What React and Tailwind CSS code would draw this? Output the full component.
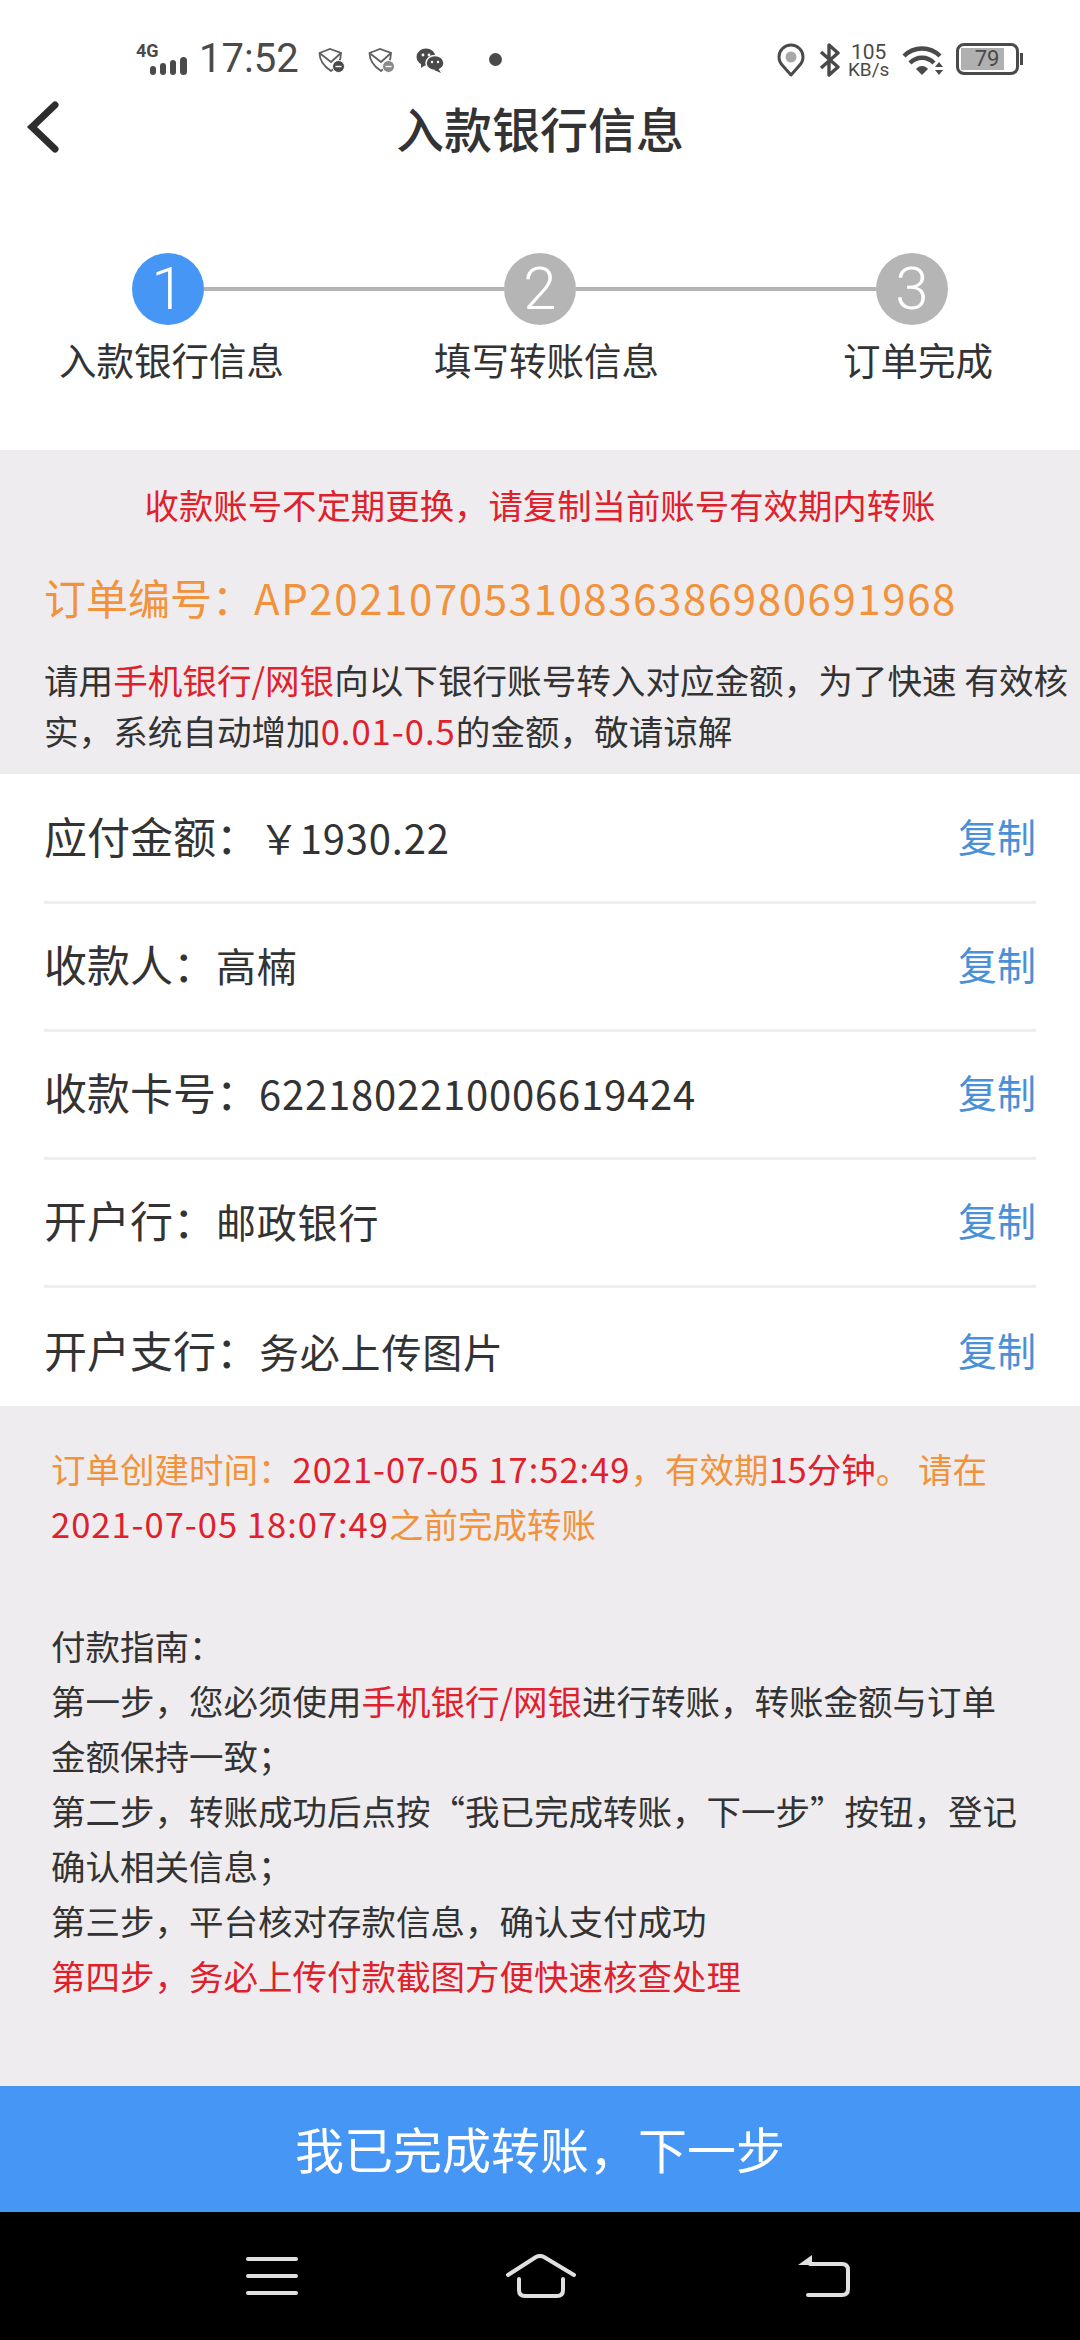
const font = { fontFamily: '"Noto Sans CJK SC", Roboto, sans-serif' };

function StatusBar() {
  return (
    <div className="h-[85px] flex items-start pt-[43px] pl-[136px] text-[#4a4a4a]">
      <div className="relative w-[63px] h-[34px]">
        <span className="absolute left-0 top-0 text-[18px] leading-[15px] font-bold font-['Roboto']">4G</span>
        <div className="absolute left-[14px] top-[14px] h-[18px] flex items-end gap-[4px]">
          <i className="block w-[6px] h-[9px] rounded-sm bg-[#4a4a4a]" />
          <i className="block w-[6px] h-[12px] rounded-sm bg-[#4a4a4a]" />
          <i className="block w-[6px] h-[15px] rounded-sm bg-[#4a4a4a]" />
          <i className="block w-[7px] h-[18px] rounded-sm bg-[#4a4a4a]" />
        </div>
      </div>
      <span className="text-[40px] leading-[32px] font-['Roboto']">17:52</span>
      <MailShield className="ml-[19px] mt-[5px]" />
      <MailShield className="ml-[23px] mt-[5px]" plus />
      <WeChat />
      <span className="w-[13px] h-[13px] rounded-full bg-[#4a4a4a] ml-[45px] mt-[10px]" />
      <svg className="ml-[275px]" width="28" height="34" viewBox="0 0 28 34">
        <path d="M14 32 L6 23 C3 20 2 17 2 14 A12 12 0 0 1 26 14 C26 17 25 20 22 23Z" fill="none" stroke="#4a4a4a" strokeWidth="3" strokeLinejoin="round" />
        <circle cx="14" cy="14" r="5.5" fill="#a8a8a8" />
      </svg>
      <svg className="ml-[14px]" width="22" height="34" viewBox="0 0 22 34">
        <path d="M2 9 L19 24 L10 32 V2 L19 10 L2 25" fill="none" stroke="#4a4a4a" strokeWidth="3.4" strokeLinejoin="round" />
      </svg>
      <div className="w-[44px] flex flex-col items-center ml-[6px] font-['Roboto']">
        <span className="text-[21px] leading-[18px]">105</span>
        <span className="text-[19px] leading-[17px]">KB/s</span>
      </div>
      <svg className="ml-[11px] mt-[2px]" width="44" height="31" viewBox="0 0 44 31">
        <path d="M2 11 C12 1 28 1 38 11" fill="none" stroke="#4a4a4a" strokeWidth="4.4" />
        <path d="M8 18 C15 11 25 11 32 18" fill="none" stroke="#4a4a4a" strokeWidth="4.4" />
        <path d="M14 24 C17 20 23 20 26 24 L20 30Z" fill="#4a4a4a" />
        <path d="M37 17 L41 22 H33Z M33 25 H41 L37 30Z" fill="#4a4a4a" />
      </svg>
      <div className="relative ml-[10px] w-[63px] h-[32px] rounded-[8px] border-[3px] border-[#4a4a4a] p-[2px]">
        <div className="w-[43px] h-full bg-[#b0b0b0]" />
        <span className="absolute inset-0 flex items-center justify-center text-[22px] leading-none font-['Roboto']">79</span>
        <i className="absolute right-[-7px] top-[7px] block w-[3px] h-[12px] bg-[#4a4a4a]" />
      </div>
    </div>
  );
}

function MailShield({ className, plus }) {
  return (
    <svg className={className} width="27" height="25" viewBox="0 0 27 25">
      <path d="M1.5 5 L12 1 L23 5 C23 13 19 19 13 23 C7 19 1.5 13 1.5 5Z" fill="none" stroke="#606060" strokeWidth="1.8" />
      <path d="M1.5 5 L13 14 L23 5" fill="none" stroke="#606060" strokeWidth="1.8" />
      <circle cx="20.5" cy="18.5" r="6" fill={plus ? '#8a8a8a' : '#4a4a4a'} stroke="#fff" />
      <path d="M17.5 18.5 H23.5" stroke="#fff" strokeWidth="1.4" />
    </svg>
  );
}

function WeChat() {
  return (
    <svg className="ml-[21px] mt-[5px]" width="28" height="25" viewBox="0 0 28 25" fill="#4a4a4a">
      <ellipse cx="10" cy="9" rx="9.5" ry="8.5" />
      <path d="M5 14 L5 20 L11 16Z" />
      <ellipse cx="19" cy="15" rx="9" ry="7.5" stroke="#fff" strokeWidth="1.4" />
      <path d="M22 20 L25 25 L18 22Z" />
      <circle cx="7" cy="7" r="1.4" fill="#fff" />
      <circle cx="13" cy="7" r="1.4" fill="#fff" />
      <circle cx="16" cy="14" r="1.2" fill="#fff" />
      <circle cx="22" cy="14" r="1.2" fill="#fff" />
    </svg>
  );
}

function Step({ n, label, active, labelClass }) {
  return (
    <div className="relative w-[72px] h-[72px] shrink-0">
      <div className={`w-[72px] h-[72px] rounded-full flex items-center justify-center text-white text-[60px] leading-none font-['Roboto'] font-light ${active ? 'bg-[#4696f6]' : 'bg-[#b5b5b5]'}`}>
        {n}
      </div>
      <span className={`absolute top-[82px] whitespace-nowrap text-[37.5px] leading-[48px] text-[#333] ${labelClass}`}>{label}</span>
    </div>
  );
}

function Row({ label, value, last }) {
  return (
    <div className={`h-[128px] pb-[6px] flex items-center justify-between text-[#333] ${last ? '' : 'border-b-[3px] border-[#eeeeee]'}`}>
      <div className="flex items-baseline">
        <span className="text-[43px]">{label}&#xFF1A;</span>
        <span className="text-[40px] tracking-[0.8px]">{value}</span>
      </div>
      <span className="text-[39px] text-[#4a90d9]">复制</span>
    </div>
  );
}

export default function App() {
  const rows = [
    { label: '应付金额', value: '\uFFE51930.22' },
    { label: '收款人', value: '高楠' },
    { label: '收款卡号', value: '6221802210006619424' },
    { label: '开户行', value: '邮政银行' },
    { label: '开户支行', value: '务必上传图片' },
  ];

  return (
    <div className="w-[1080px] h-[2340px] flex flex-col bg-white overflow-hidden" style={font}>
      <StatusBar />

      <header className="relative h-[86px] pb-[2px] flex items-center justify-center">
        <svg className="absolute left-[24px] top-[15px]" width="40" height="56" viewBox="0 0 40 56" fill="none" stroke="#2d2d2d" strokeWidth="7" strokeLinecap="round" strokeLinejoin="miter">
          <path d="M31 5 L8 27 L31 49" />
        </svg>
        <h1 className="text-[48px] leading-[60px] font-medium text-[#333]">入款银行信息</h1>
      </header>

      <div className="h-[279px] pt-[82px] px-[132px]">
        <div className="flex items-center">
          <Step n="1" label="入款银行信息" active labelClass="left-[-73px]" />
          <div className="flex-1 h-[4px] bg-[#b5b5b5]" />
          <Step n="2" label="填写转账信息" labelClass="left-[-70px]" />
          <div className="flex-1 h-[4px] bg-[#b5b5b5]" />
          <Step n="3" label="订单完成" labelClass="left-[-33px]" />
        </div>
      </div>

      <section className="h-[324px] bg-[#eeecef] pl-[44px] pr-[10px] pt-[29px]">
        <p className="text-[34.4px] leading-[50px] text-center pr-[34px] text-[#e0202a]">收款账号不定期更换&#xFF0C;请复制当前账号有效期内转账</p>
        <p className="text-[42px] leading-[56px] mt-[40px] text-[#f2923a]">订单编号&#xFF1A;<span className="tracking-[1.6px]">AP20210705310836386980691968</span></p>
        <p className="text-[34.6px] leading-[51px] mt-[29px] text-[#333]">
          请用<span className="text-[#e0202a]">手机银行/网银</span>向以下银行账号转入对应金额&#xFF0C;为了快速 有效核<br />
          实&#xFF0C;系统自动增加<span className="text-[#e0202a] tracking-[1px]">0.01-0.5</span>的金额&#xFF0C;敬请谅解
        </p>
      </section>

      <section className="h-[632px] px-[44px] pt-[2px]">
        {rows.map((r, i) => (
          <Row key={r.label} label={r.label} value={r.value} last={i === rows.length - 1} />
        ))}
      </section>

      <section className="flex-1 bg-[#eeecef] pl-[51px] pr-[20px] pt-[35px] text-[34.5px] leading-[55px] text-[#333]">
        <p className="text-[#f2923a]">
          订单创建时间&#xFF1A;<span className="text-[#e0202a] tracking-[1px]">2021-07-05 17:52:49</span>&#xFF0C;有效期<span className="text-[#e0202a]">15分钟</span>&#x3002; 请在<br />
          <span className="text-[#e0202a] tracking-[1px]">2021-07-05 18:07:49</span>之前完成转账
        </p>
        <p className="mt-[67px]">付款指南&#xFF1A;</p>
        <p>第一步&#xFF0C;您必须使用<span className="text-[#e0202a]">手机银行/网银</span>进行转账&#xFF0C;转账金额与订单<br />金额保持一致&#xFF1B;</p>
        <p>第二步&#xFF0C;转账成功后点按&#x201C;我已完成转账&#xFF0C;下一步&#x201D;按钮&#xFF0C;登记<br />确认相关信息&#xFF1B;</p>
        <p>第三步&#xFF0C;平台核对存款信息&#xFF0C;确认支付成功</p>
        <p className="text-[#e0202a]">第四步&#xFF0C;务必上传付款截图方便快速核查处理</p>
      </section>

      <button className="h-[126px] pb-[2px] bg-[#4696f6] text-white text-[49px]">我已完成转账&#xFF0C;下一步</button>

      <nav className="h-[128px] bg-black flex items-center pl-[246px]">
        <svg width="52" height="42" viewBox="0 0 52 42" fill="none" stroke="#e0e0e0" strokeWidth="4" strokeLinecap="round">
          <path d="M2 4 H50 M2 21 H50 M2 38 H50" />
        </svg>
        <svg className="ml-[207px]" width="72" height="44" viewBox="0 0 72 44" fill="none" stroke="#e0e0e0" strokeWidth="4" strokeLinecap="round" strokeLinejoin="round">
          <path d="M3 21 L31 3 Q35 1 39 3 L69 21" />
          <path d="M14 25 V36 Q14 42 20 42 H52 Q58 42 58 36 V25" />
        </svg>
        <svg className="ml-[221px]" width="52" height="42" viewBox="0 0 52 42" fill="none">
          <path d="M0 10 L14 0 V10Z" fill="#e0e0e0" />
          <path d="M12 9 H44 Q50 9 50 15 V34 Q50 40 44 40 H10" stroke="#e0e0e0" strokeWidth="4" strokeLinecap="round" />
        </svg>
      </nav>
    </div>
  );
}
